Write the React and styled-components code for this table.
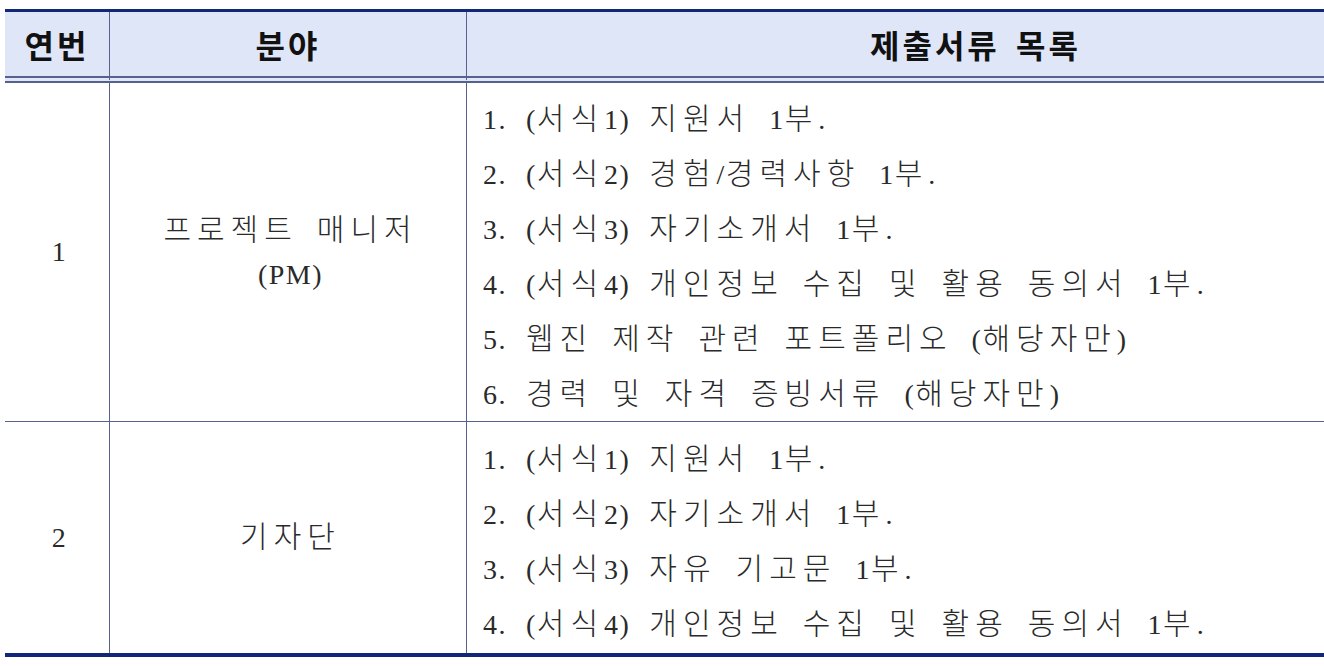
import React from "react";
import styled, { createGlobalStyle } from "styled-components";

const Global = createGlobalStyle`
  *, *::before, *::after { box-sizing: border-box; }
  html, body { margin: 0; padding: 0; background: #ffffff; }
  body { width: 1324px; height: 666px; overflow: hidden; }
`;

const NAVY = "#13277a";
const LINE = "#56618f";

const Wrap = styled.div`
  padding: 9px 0 0 5px;
`;

const Table = styled.div`
  display: grid;
  grid-template-columns: 104px 357px 1fr;
  width: 1319px;
  border-top: 3px solid ${NAVY};
  border-bottom: 4px solid ${NAVY};
  color: #2a2a2a;
`;

const HeadCell = styled.div`
  height: 71px;
  background: #dfe6f7;
  border-bottom: 7px double ${LINE};
  border-left: ${(p) => (p.$first ? "none" : `1px solid ${LINE}`)};
  display: flex;
  align-items: center;
  justify-content: center;
  padding-left: ${(p) => p.$shift || 0}px;
  font-family: "Noto Sans CJK KR", sans-serif;
  font-weight: 700;
  font-size: 32px;
  letter-spacing: 3px;
  word-spacing: 6px;
  color: #111;
`;

const BodyCell = styled.div`
  height: ${(p) => p.$h}px;
  border-left: ${(p) => (p.$first ? "none" : `1px solid ${LINE}`)};
  border-bottom: ${(p) => (p.$last ? "none" : `1px solid ${LINE}`)};
  display: flex;
  flex-direction: column;
  align-items: center;
  justify-content: center;
  text-align: center;
  font-family: "Liberation Serif", "Noto Sans CJK KR", serif;
  font-weight: 300;
  font-size: 28px;
  line-height: 44px;
  letter-spacing: 1.5px;
  word-spacing: 10.5px;
  padding-left: 5px;
`;

const ListCell = styled.div`
  height: ${(p) => p.$h}px;
  border-left: 1px solid ${LINE};
  border-bottom: ${(p) => (p.$last ? "none" : `1px solid ${LINE}`)};
  padding: ${(p) => p.$pt}px 0 0 16px;
  font-family: "Liberation Serif", "Noto Sans CJK KR", serif;
  font-weight: 300;
  font-size: 28px;
  line-height: 54px;
  letter-spacing: 1.5px;
  word-spacing: 10.5px;
  white-space: pre;
`;

const Item = styled.div``;

const Hangul = styled.span`
  font-size: 30px;
  letter-spacing: 6px;
`;

function Rich({ text }) {
  const parts = text.split(/([\uAC00-\uD7A3]+)/).filter(Boolean);
  return parts.map((p, i) =>
    /[\uAC00-\uD7A3]/.test(p) ? <Hangul key={i}>{p}</Hangul> : <React.Fragment key={i}>{p}</React.Fragment>
  );
}

const rows = [
  {
    no: "1",
    field: ["프로젝트 매니저", "(PM)"],
    h: 339,
    pt: 9,
    docs: [
      "1. (서식1) 지원서 1부.",
      "2. (서식2) 경험/경력사항 1부.",
      "3. (서식3) 자기소개서 1부.",
      "4. (서식4) 개인정보 수집 및 활용 동의서 1부.",
      "5. 웹진 제작 관련 포트폴리오 (해당자만)",
      "6. 경력 및 자격 증빙서류 (해당자만)",
    ],
  },
  {
    no: "2",
    field: ["기자단"],
    h: 231,
    pt: 10,
    last: true,
    docs: [
      "1. (서식1) 지원서 1부.",
      "2. (서식2) 자기소개서 1부.",
      "3. (서식3) 자유 기고문 1부.",
      "4. (서식4) 개인정보 수집 및 활용 동의서 1부.",
    ],
  },
];

export default function App() {
  return (
    <Wrap>
      <Global />
      <Table>
        <HeadCell $first>연번</HeadCell>
        <HeadCell>분야</HeadCell>
        <HeadCell $shift={160}>제출서류 목록</HeadCell>
        {rows.map((r) => (
          <React.Fragment key={r.no}>
            <BodyCell $first $h={r.h} $last={r.last}>
              {r.no}
            </BodyCell>
            <BodyCell $h={r.h} $last={r.last}>
              {r.field.map((f) => (
                <div key={f}>
                  <Rich text={f} />
                </div>
              ))}
            </BodyCell>
            <ListCell $h={r.h} $pt={r.pt} $last={r.last}>
              {r.docs.map((d) => (
                <Item key={d}>
                  <Rich text={d} />
                </Item>
              ))}
            </ListCell>
          </React.Fragment>
        ))}
      </Table>
    </Wrap>
  );
}
